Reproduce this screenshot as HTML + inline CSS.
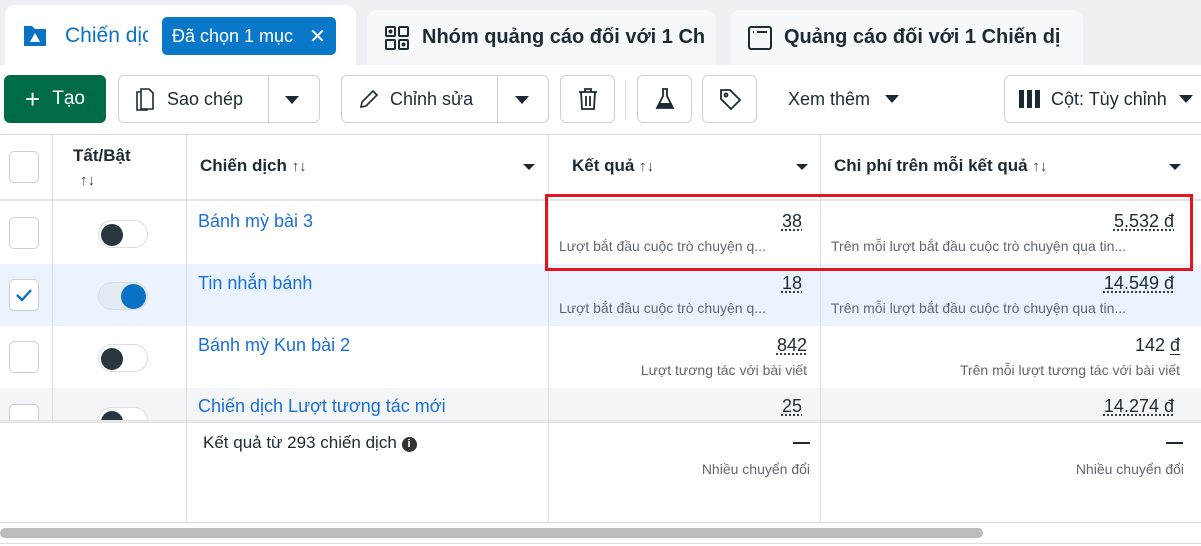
<!DOCTYPE html>
<html><head><meta charset="utf-8"><style>
*{box-sizing:border-box;margin:0;padding:0}
body{width:1201px;height:546px;overflow:hidden;background:#fff;font-family:"Liberation Sans","Noto Sans CJK SC",sans-serif;color:#1c2b33;position:relative}
.a{position:absolute}
.tab{position:absolute;border-radius:10px 10px 0 0;font-size:20px;display:flex;align-items:center;white-space:nowrap;overflow:hidden}
.btn{position:absolute;top:75px;height:48px;border:1px solid #cbd2d9;border-radius:6px;background:#fff;display:flex;align-items:center;font-size:18px}
.tri{width:0;height:0;border-left:7px solid transparent;border-right:7px solid transparent;border-top:8px solid #1c2b33;display:inline-block}
.vl{position:absolute;width:1px;background:#dadde1}
.cb{position:absolute;left:9px;width:30px;height:32px;border:1px solid #ccd0d5;border-radius:5px;background:#fff}
.tg{position:absolute;left:98px;width:50px;height:28px;border:1px solid #dadde1;border-radius:14px;background:#fff}
.tg i{position:absolute;left:2px;top:3px;width:22px;height:22px;border-radius:50%;background:#283640}
.nm{position:absolute;left:198px;font-size:18px;color:#1a6ed8}
.num{position:absolute;font-size:18px;text-align:right;text-decoration:underline dotted;text-underline-offset:3px}
.sub{position:absolute;font-size:14px;color:#606770;text-align:right;white-space:nowrap}
</style></head><body>
<div class="a" style="left:0;top:0;width:1201px;height:65px;background:#eef0f3"></div>
<div class="tab" style="left:5px;top:5px;width:351px;height:62px;background:#fff;padding-left:16px">
<svg width="28" height="28" viewBox="0 0 28 28"><path d="M3 4h8l3 3h11v17H3z" fill="#0a72c2"/><path d="M14 11l5 9h-10z" fill="#fff"/></svg>
<span style="color:#0a72c2;margin-left:16px;font-size:21px;width:83px;overflow:hidden">Chiến dịch</span>
<span style="background:#0a78c8;color:#fff;border-radius:5px;height:38px;display:flex;align-items:center;padding:0 10px;font-size:18px;margin-left:14px">Đã chọn 1 mục<span style="margin-left:16px;font-size:20px">✕</span></span>
</div>
<div class="tab" style="left:367px;top:10px;width:349px;height:55px;background:#f7f8fa">
<svg class="a" style="left:18px;top:16px" width="24" height="24" viewBox="0 0 24 24" fill="none" stroke="#1c2b33" stroke-width="2"><rect x="1" y="1" width="9" height="9" rx="1"/><rect x="14" y="1" width="9" height="9" rx="1"/><rect x="1" y="14" width="9" height="9" rx="1"/><rect x="14" y="14" width="9" height="9" rx="1"/><circle cx="5.5" cy="5.5" r="1" fill="#1c2b33"/><circle cx="18.5" cy="18.5" r="1" fill="#1c2b33"/></svg>
<span style="margin-left:55px;font-weight:bold;font-size:20px">Nhóm quảng cáo đối với 1 Ch</span></div>
<div class="tab" style="left:730px;top:10px;width:353px;height:55px;background:#f7f8fa">
<svg class="a" style="left:18px;top:16px" width="24" height="24" viewBox="0 0 24 24" fill="none" stroke="#1c2b33" stroke-width="2"><rect x="1" y="1" width="22" height="22" rx="2"/><path d="M5 6h1M9 6h10"/></svg>
<span style="margin-left:54px;font-weight:bold;font-size:20px">Quảng cáo đối với 1 Chiến dị</span></div>

<div class="btn" style="left:4px;width:102px;background:#006b47;border-color:#006b47;color:#fff;justify-content:center;font-size:19px"><span style="font-size:26px;margin-right:12px;font-weight:300">+</span>Tạo</div>
<div class="btn" style="left:118px;width:202px"><svg style="margin-left:14px" width="24" height="26" viewBox="0 0 24 26" fill="none" stroke="#1c2b33" stroke-width="1.6"><path d="M8 3h8l4 4v16H8z"/><path d="M8 6H4v18h10v-1"/></svg><span style="margin-left:10px">Sao chép</span><span style="position:absolute;left:149px;top:0;bottom:0;width:1px;background:#cbd2d9"></span><span class="tri" style="position:absolute;left:166px;top:20px"></span></div>
<div class="btn" style="left:341px;width:208px"><svg style="margin-left:16px" width="22" height="22" viewBox="0 0 22 22" fill="none" stroke="#1c2b33" stroke-width="1.6"><path d="M3 19l1-5L15 3l4 4L8 18z"/></svg><span style="margin-left:10px">Chỉnh sửa</span><span style="position:absolute;left:155px;top:0;bottom:0;width:1px;background:#cbd2d9"></span><span class="tri" style="position:absolute;left:173px;top:20px"></span></div>
<div class="btn" style="left:560px;width:55px;justify-content:center"><svg width="22" height="24" viewBox="0 0 22 24" fill="none" stroke="#1c2b33" stroke-width="1.8"><path d="M2 5h18M8 5V2h6v3M4 5l1 17h12l1-17M9 9v10M13 9v10"/></svg></div>
<div class="vl" style="left:625px;top:80px;height:40px;background:#ddd"></div>
<div class="btn" style="left:637px;width:55px;justify-content:center"><svg width="22" height="24" viewBox="0 0 22 24"><path d="M8 2h6M9 2v7L3 21h16L13 9V2" fill="none" stroke="#1c2b33" stroke-width="1.8"/><path d="M5 16h12l2 5H3z" fill="#1c2b33"/></svg></div>
<div class="btn" style="left:702px;width:55px;justify-content:center"><svg width="24" height="24" viewBox="0 0 24 24" fill="none" stroke="#1c2b33" stroke-width="1.8"><path d="M3 3h9l10 10-9 9L3 12z"/><circle cx="8" cy="8" r="1.5"/></svg></div>
<div class="a" style="left:788px;top:89px;font-size:18px">Xem thêm <span class="tri" style="margin-left:10px;vertical-align:2px"></span></div>
<div class="btn" style="left:1004px;width:210px"><svg style="margin-left:14px" width="22" height="18"><rect x="0" y="0" width="5" height="18" fill="#1c2b33"/><rect x="8" y="0" width="5" height="18" fill="#1c2b33"/><rect x="16" y="0" width="5" height="18" fill="#1c2b33"/></svg><span style="margin-left:10px">Cột: Tùy chỉnh</span><span class="tri" style="margin-left:12px"></span></div>

<!-- table -->
<div class="a" style="left:0;top:134px;width:1201px;height:1px;background:#dadde1"></div>
<div class="a" style="left:0;top:199px;width:1201px;height:2px;background:#e4e6e9"></div>
<div class="a" style="left:0;top:264px;width:1201px;height:62px;background:#ebf4fe"></div>
<div class="a" style="left:0;top:388px;width:1201px;height:32px;background:#f4f5f6"></div>
<div class="a" style="left:0;top:420px;width:1201px;height:3px;background:#e4e6e9"></div>
<div class="vl" style="left:52px;top:135px;height:285px"></div>
<div class="vl" style="left:186px;top:135px;height:387px"></div>
<div class="vl" style="left:548px;top:135px;height:387px"></div>
<div class="vl" style="left:820px;top:135px;height:387px"></div>
<div class="a" style="left:0;top:522px;width:1201px;height:1px;background:#dadde1"></div>
<div class="a" style="left:0;top:528px;width:983px;height:10px;border-radius:5px;background:#bcbcbc"></div>
<div class="a" style="left:0;top:543px;width:1201px;height:1px;background:#dadde1"></div>

<div class="cb" style="top:151px"></div>
<div class="a" style="left:73px;top:146px;font-size:17px;font-weight:bold">Tất/Bật</div>
<div class="a" style="left:80px;top:172px;font-size:15px;color:#444">↑↓</div>
<div class="a" style="left:200px;top:156px;font-size:17px;font-weight:bold">Chiến dịch <span style="font-weight:normal;color:#444;font-size:15px">↑↓</span></div>
<div class="a" style="left:523px;top:164px;border-left:6px solid transparent;border-right:6px solid transparent;border-top:6px solid #1c2b33"></div>
<div class="a" style="left:572px;top:156px;font-size:17px;font-weight:bold">Kết quả <span style="font-weight:normal;color:#444;font-size:15px">↑↓</span></div>
<div class="a" style="left:796px;top:164px;border-left:6px solid transparent;border-right:6px solid transparent;border-top:6px solid #1c2b33"></div>
<div class="a" style="left:834px;top:156px;font-size:17px;font-weight:bold">Chi phí trên mỗi kết quả <span style="font-weight:normal;color:#444;font-size:15px">↑↓</span></div>
<div class="a" style="left:1169px;top:164px;border-left:6px solid transparent;border-right:6px solid transparent;border-top:6px solid #1c2b33"></div>

<!-- row1 -->
<div class="cb" style="top:217px"></div>
<div class="tg" style="top:220px"><i></i></div>
<div class="nm" style="top:211px">Bánh mỳ bài 3</div>
<div class="num" style="right:399px;top:211px">38</div>
<div class="sub" style="left:559px;top:238px">Lượt bắt đầu cuộc trò chuyện q...</div>
<div class="num" style="right:27px;top:211px">5.532 đ</div>
<div class="sub" style="left:831px;top:238px">Trên mỗi lượt bắt đầu cuộc trò chuyện qua tin...</div>
<!-- row2 -->
<div class="cb" style="top:279px;border-color:#ccd0d5"><svg width="28" height="30" viewBox="0 0 28 30"><path d="M7 15l5 5 9-10" fill="none" stroke="#0a72c2" stroke-width="2.4"/></svg></div>
<div class="tg" style="top:282px;background:#e4ebf2"><i style="left:22px;top:1px;width:25px;height:25px;background:#0a72c2"></i></div>
<div class="nm" style="top:273px">Tin nhắn bánh</div>
<div class="num" style="right:399px;top:273px">18</div>
<div class="sub" style="left:559px;top:300px">Lượt bắt đầu cuộc trò chuyện q...</div>
<div class="num" style="right:27px;top:273px">14.549 đ</div>
<div class="sub" style="left:831px;top:300px">Trên mỗi lượt bắt đầu cuộc trò chuyện qua tin...</div>
<!-- row3 -->
<div class="cb" style="top:341px"></div>
<div class="tg" style="top:344px"><i></i></div>
<div class="nm" style="top:335px">Bánh mỳ Kun bài 2</div>
<div class="num" style="right:394px;top:335px">842</div>
<div class="sub" style="right:394px;top:362px">Lượt tương tác với bài viết</div>
<div class="num" style="right:21px;top:335px;text-decoration:none">142 <u>đ</u></div>
<div class="sub" style="right:21px;top:362px">Trên mỗi lượt tương tác với bài viết</div>
<!-- row4 -->
<div class="a" style="left:0;top:388px;width:1201px;height:32px;overflow:hidden">
<div class="cb" style="top:16px"></div>
<div class="tg" style="top:19px"><i></i></div>
<div class="nm" style="top:8px">Chiến dịch Lượt tương tác mới</div>
<div class="num" style="right:399px;top:8px">25</div>
<div class="num" style="right:27px;top:8px">14.274 đ</div>
</div>
<!-- footer -->
<div class="a" style="left:203px;top:433px;font-size:17px">Kết quả từ 293 chiến dịch <span style="display:inline-block;width:15px;height:15px;border-radius:50%;background:#333;color:#fff;font-size:11px;text-align:center;line-height:15px;font-weight:bold;vertical-align:1px">i</span></div>
<div class="a" style="left:793px;top:442px;width:17px;height:2px;background:#1c2b33"></div>
<div class="sub" style="right:391px;top:461px">Nhiều chuyển đổi</div>
<div class="a" style="left:1166px;top:442px;width:17px;height:2px;background:#1c2b33"></div>
<div class="sub" style="right:17px;top:461px">Nhiều chuyển đổi</div>

<div class="a" style="left:545px;top:194px;width:648px;height:77px;border:3px solid #e3151f"></div>
</body></html>
